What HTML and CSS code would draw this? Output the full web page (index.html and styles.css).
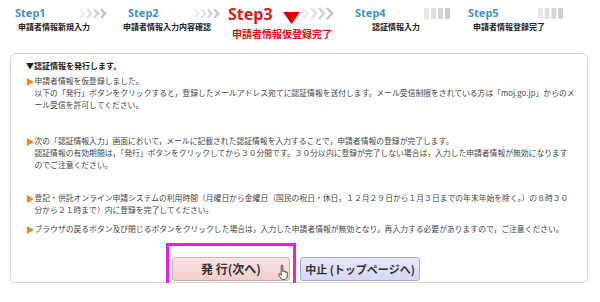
FILE: index.html
```html
<!DOCTYPE html>
<html lang="ja">
<head>
    <meta charset="UTF-8">
    <meta name="viewport" content="width=device-width, initial-scale=1.0">
    <title>申請者情報仮登録完了</title>
    <link rel="stylesheet" href="styles.css">
</head>
<body>
    <!-- Progress steps -->
    <div class="steps">
        <div class="step step-1">
            <div class="step-label">Step1</div>
            <div class="step-name">申請者情報新規入力</div>
        </div>
        <svg class="chevrons chev-1" viewBox="0 0 30 11" width="30" height="11">
            <polyline points="2,1 6,5.5 2,10" stroke="#ececec"/>
            <polyline points="9,1 13,5.5 9,10" stroke="#e0e0e0"/>
            <polyline points="16,1 20,5.5 16,10" stroke="#d4d4d4"/>
            <polyline points="23,1 27,5.5 23,10" stroke="#c6c6c6"/>
        </svg>
        <div class="step step-2">
            <div class="step-label">Step2</div>
            <div class="step-name">申請者情報入力内容確認</div>
        </div>
        <svg class="chevrons chev-2" viewBox="0 0 30 11" width="28" height="11">
            <polyline points="2,1 6,5.5 2,10" stroke="#ececec"/>
            <polyline points="9,1 13,5.5 9,10" stroke="#e0e0e0"/>
            <polyline points="16,1 20,5.5 16,10" stroke="#d4d4d4"/>
            <polyline points="23,1 27,5.5 23,10" stroke="#c6c6c6"/>
        </svg>
        <div class="step step-3 current">
            <div class="step-label">Step3</div>
            <div class="step-name">申請者情報仮登録完了</div>
        </div>
        <svg class="marker" viewBox="0 0 17 12" width="17" height="12">
            <polygon points="0,0 17,0 8.5,12" fill="#e00000"/>
        </svg>
        <svg class="chevrons chev-3" viewBox="0 0 35 13" width="35" height="13">
            <polyline points="3,1 8,6.5 3,12" stroke="#ececec"/>
            <polyline points="11,1 16,6.5 11,12" stroke="#e0e0e0"/>
            <polyline points="19,1 24,6.5 19,12" stroke="#d2d2d2"/>
            <polyline points="27,1 32,6.5 27,12" stroke="#c4c4c4"/>
        </svg>
        <div class="step step-4">
            <div class="step-label">Step4</div>
            <div class="step-name">認証情報入力</div>
        </div>
        <svg class="bars bars-4" viewBox="0 0 26 11" width="26" height="11">
            <rect x="0" y="0" width="5" height="11" fill="#e6e6e6"/>
            <rect x="7" y="0" width="5" height="11" fill="#dddddd"/>
            <rect x="14" y="0" width="5" height="11" fill="#d4d4d4"/>
            <rect x="21" y="0" width="5" height="11" fill="#cccccc"/>
        </svg>
        <div class="step step-5">
            <div class="step-label">Step5</div>
            <div class="step-name">申請者情報登録完了</div>
        </div>
        <svg class="bars bars-5" viewBox="0 0 26 11" width="25" height="11">
            <rect x="0" y="0" width="5" height="11" fill="#e6e6e6"/>
            <rect x="7" y="0" width="5" height="11" fill="#dddddd"/>
            <rect x="14" y="0" width="5" height="11" fill="#d4d4d4"/>
            <rect x="21" y="0" width="5" height="11" fill="#cccccc"/>
        </svg>
    </div>

    <div class="panel">
        <h2 class="panel-title">▼認証情報を発行します。</h2>
        <ul class="notes">
            <li>申請者情報を仮登録しました。<br>以下の「発行」ボタンをクリックすると，登録したメールアドレス宛てに認証情報を送付します。メール受信制限をされている方は「moj.go.jp」からのメ<br>ール受信を許可してください。</li>
            <li>次の「認証情報入力」画面において，メールに記載された認証情報を入力することで，申請者情報の登録が完了します。<br>認証情報の有効期間は，「発行」ボタンをクリックしてから３０分間です。３０分以内に登録が完了しない場合は，入力した申請者情報が無効になります<br>のでご注意ください。</li>
            <li>登記・供託オンライン申請システムの利用時間（月曜日から金曜日（国民の祝日・休日，１２月２９日から１月３日までの年末年始を除く。）の８時３０<br>分から２１時まで）内に登録を完了してください。</li>
            <li>ブラウザの戻るボタン及び閉じるボタンをクリックした場合は，入力した申請者情報が無効となり，再入力する必要がありますので，ご注意ください。</li>
        </ul>
        <div class="actions">
            <div class="highlight">
                <button class="btn btn-issue">発 行(次へ)
                    <svg class="cursor" viewBox="0 0 11 16" width="11" height="16">
                        <path d="M3.2 1.8c0-1 1.6-1 1.6 0V7.5c0-1 1.5-1 1.5 0v.6c0-1 1.5-1 1.5 0v.6c0-1 1.5-1 1.5 .1V12c0 2-1.1 3.4-3 3.4H5C3.6 15.4 3 14.6 2.2 13.2L.8 10.6c-.4-.8.5-1.4 1.1-.8L3.2 11.2Z" fill="#fff" stroke="#222" stroke-width=".8"/>
                    </svg>
                </button>
            </div>
            <button class="btn btn-cancel">中止 (トップページへ)</button>
        </div>
    </div>
</body>
</html>
```

FILE: styles.css
```css
body {
    margin: 0;
    width: 600px;
    font-family: "Noto Sans CJK JP", sans-serif;
    color: #444;
    background: #fff;
}

/* step header */
.steps {
    display: flex;
    align-items: flex-start;
    box-sizing: border-box;
    height: 53px;
    padding: 6px 0 0 15px;
}
.step-label {
    font: bold 11px/14px "Noto Sans", sans-serif;
    color: #4292cc;
}
.step-name {
    font: bold 8px/10px "Noto Sans CJK JP", sans-serif;
    color: #222;
    margin-top: 2px;
    white-space: nowrap;
}
.step-1 {
    width: 63px;
}
.step-1 .step-name {
    margin-left: 3px;
}
.step-2 {
    margin-left: 15px;
    width: 70px;
}
.step-2 .step-label {
    padding-left: 5px;
}
.step-3 {
    margin-left: 7px;
    width: 55px;
}
.step-3 .step-label {
    font-size: 16px;
    line-height: 18px;
    margin-top: -1px;
    color: #d42020;
}
.step-3 .step-name {
    font-size: 10px;
    line-height: 12px;
    margin: 5px 0 0 4px;
    color: #e01010;
}
.step-4 {
    margin-left: 20px;
    width: 69px;
}
.step-4 .step-name {
    padding-left: 17px;
}
.step-5 {
    margin-left: 18px;
    width: 70px;
}
.step-5 .step-name {
    padding-left: 5px;
}
.chevrons {
    margin-top: 2px;
    flex-shrink: 0;
}
.chevrons polyline {
    fill: none;
    stroke-width: 2.6;
}
.chev-3 {
    margin-top: 1px;
}
.marker {
    margin-top: 6px;
    flex-shrink: 0;
}
.bars {
    margin-top: 2px;
    flex-shrink: 0;
}

/* message panel */
.panel {
    margin: 0 12px 0 10px;
    padding: 6px 10px 0 15px;
    border: 1px solid #d8d8d8;
    border-radius: 6px;
    box-shadow: 0 1px 3px rgba(0, 0, 0, 0.12);
}
.panel-title {
    margin: 0 0 3px;
    font-size: 8px;
    line-height: 12px;
    font-weight: bold;
    color: #222;
}
.notes {
    list-style: none;
    margin: 0;
    padding: 0;
}
.notes li {
    display: flex;
    font-size: 7.8px;
    line-height: 12px;
    white-space: nowrap;
}
.notes li::before {
    content: "▶";
    flex: 0 0 7px;
    color: #f08a10;
    font-size: 8.5px;
    line-height: 12px;
}
.notes li + li {
    margin-top: 24px;
}
.notes li:nth-child(3) {
    margin-top: 21px;
}
.notes li:nth-child(4) {
    margin-top: 7px;
}

/* buttons */
.actions {
    display: flex;
    align-items: flex-end;
    gap: 4px;
    margin: 8px 0 -8px 140px;
}
.highlight {
    display: flex;
    border: 3px solid #e61ee6;
    padding: 11px 3px 6px;
}
.btn {
    position: relative;
    height: 24px;
    padding: 0;
    border-radius: 3px;
    font: bold 12px/22px "Noto Sans CJK JP", sans-serif;
    color: #333;
    white-space: nowrap;
    cursor: pointer;
}
.btn-issue {
    width: 118px;
    border: 1px solid #d6aeae;
    background: linear-gradient(#fbe4e4, #f2cccc);
}
.btn-cancel {
    width: 120px;
    margin-bottom: 9px;
    font-size: 11px;
    border: 1px solid #a8a8d8;
    background: linear-gradient(#e8e8fc, #d6d6f6);
}
.cursor {
    position: absolute;
    right: 0;
    top: 6px;
}
```
